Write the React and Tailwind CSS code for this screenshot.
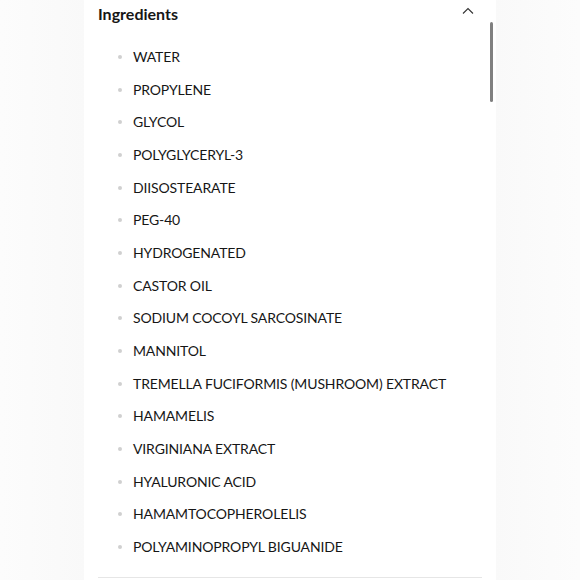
import React from 'react';

const ingredients = [
  'WATER',
  'PROPYLENE',
  'GLYCOL',
  'POLYGLYCERYL-3',
  'DIISOSTEARATE',
  'PEG-40',
  'HYDROGENATED',
  'CASTOR OIL',
  'SODIUM COCOYL SARCOSINATE',
  'MANNITOL',
  'TREMELLA FUCIFORMIS (MUSHROOM) EXTRACT',
  'HAMAMELIS',
  'VIRGINIANA EXTRACT',
  'HYALURONIC ACID',
  'HAMAMTOCOPHEROLELIS',
  'POLYAMINOPROPYL BIGUANIDE',
];

const App = () => {
  return (
    <div className="h-[580px] w-[580px] overflow-hidden bg-linear-to-r from-[#fcfcfc] via-[#f2f2f2] to-[#fcfcfc] font-['Lato',sans-serif] text-[#161616]">
      <div className="relative ml-[84px] h-full w-[412px] bg-white">
        {/* Header */}
        <div className="flex h-7 items-center justify-between pl-[14px] pr-[22px]">
          <h2 className="text-[16px] font-bold leading-none">Ingredients</h2>
          <svg width="12" height="8" viewBox="0 0 12 8" fill="none" className="mb-[6px]">
            <path d="M1 6.5L6 1.5L11 6.5" stroke="#333" strokeWidth="1.1" />
          </svg>
        </div>

        {/* Scrollbar */}
        <div className="absolute left-[406px] top-[22px] h-[80px] w-[3px] rounded-full bg-[#808080]" />

        {/* List */}
        <ul className="pb-[14px] pt-[12.7px]">
          {ingredients.map((item) => (
            <li key={item} className="flex h-[32.67px] items-center pl-[34px]">
              <span className="h-[4px] w-[4px] rounded-full bg-[#d0d0d0]" />
              <span className="ml-[11px] text-[14px] leading-none tracking-[-0.01em]">{item}</span>
            </li>
          ))}
        </ul>

        <div className="mx-[14px] border-t border-[#e6e6e6]" />
      </div>
    </div>
  );
};

export default App;
